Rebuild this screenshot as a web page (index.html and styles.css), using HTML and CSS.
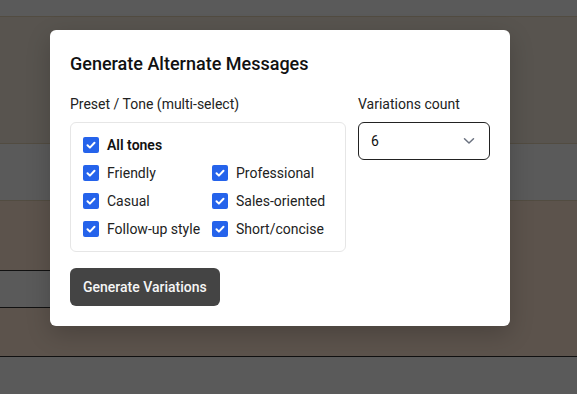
FILE: index.html
```html
<!DOCTYPE html>
<html lang="en">
<head>
<meta charset="utf-8">
<title>Generate Alternate Messages</title>
<link rel="stylesheet" href="styles.css">
</head>
<body>
<div class="page">
  <div class="band band-top"></div>
  <div class="band band-a"></div>
  <div class="band band-b"></div>
  <div class="band band-c">
    <div class="row-field"></div>
  </div>
  <div class="band band-bottom"></div>
</div>

<div class="modal" role="dialog" aria-labelledby="mtitle">
  <h2 class="modal-title" id="mtitle">Generate Alternate Messages</h2>
  <div class="modal-grid">
    <div class="col-tones">
      <div class="field-label">Preset / Tone (multi-select)</div>
      <div class="tone-box">
        <label class="tone tone-all">
          <span class="check"><svg viewBox="0 0 16 16" width="16" height="16"><path d="M4.5 8.3 L6.9 10.6 L11.5 5.8" fill="none" stroke="#fff" stroke-width="2" stroke-linecap="round" stroke-linejoin="round"/></svg></span>
          <span class="tone-text strong">All tones</span>
        </label>
        <div class="tone-grid">
          <label class="tone">
            <span class="check"><svg viewBox="0 0 16 16" width="16" height="16"><path d="M4.5 8.3 L6.9 10.6 L11.5 5.8" fill="none" stroke="#fff" stroke-width="2" stroke-linecap="round" stroke-linejoin="round"/></svg></span>
            <span class="tone-text">Friendly</span>
          </label>
          <label class="tone">
            <span class="check"><svg viewBox="0 0 16 16" width="16" height="16"><path d="M4.5 8.3 L6.9 10.6 L11.5 5.8" fill="none" stroke="#fff" stroke-width="2" stroke-linecap="round" stroke-linejoin="round"/></svg></span>
            <span class="tone-text">Professional</span>
          </label>
          <label class="tone">
            <span class="check"><svg viewBox="0 0 16 16" width="16" height="16"><path d="M4.5 8.3 L6.9 10.6 L11.5 5.8" fill="none" stroke="#fff" stroke-width="2" stroke-linecap="round" stroke-linejoin="round"/></svg></span>
            <span class="tone-text">Casual</span>
          </label>
          <label class="tone">
            <span class="check"><svg viewBox="0 0 16 16" width="16" height="16"><path d="M4.5 8.3 L6.9 10.6 L11.5 5.8" fill="none" stroke="#fff" stroke-width="2" stroke-linecap="round" stroke-linejoin="round"/></svg></span>
            <span class="tone-text">Sales-oriented</span>
          </label>
          <label class="tone">
            <span class="check"><svg viewBox="0 0 16 16" width="16" height="16"><path d="M4.5 8.3 L6.9 10.6 L11.5 5.8" fill="none" stroke="#fff" stroke-width="2" stroke-linecap="round" stroke-linejoin="round"/></svg></span>
            <span class="tone-text">Follow-up style</span>
          </label>
          <label class="tone">
            <span class="check"><svg viewBox="0 0 16 16" width="16" height="16"><path d="M4.5 8.3 L6.9 10.6 L11.5 5.8" fill="none" stroke="#fff" stroke-width="2" stroke-linecap="round" stroke-linejoin="round"/></svg></span>
            <span class="tone-text">Short/concise</span>
          </label>
        </div>
      </div>
    </div>
    <div class="col-count">
      <div class="field-label">Variations count</div>
      <div class="select">
        <span class="select-value">6</span>
        <svg class="chevron" viewBox="0 0 12 8" width="12" height="8"><path d="M1.5 1.8 L6 6 L10.5 1.8" fill="none" stroke="#6b7280" stroke-width="1.5" stroke-linecap="round" stroke-linejoin="round"/></svg>
      </div>
    </div>
  </div>
  <button class="btn-generate" type="button">Generate Variations</button>
</div>
</body>
</html>
```

FILE: styles.css
```css
* { box-sizing: border-box; }

html, body {
  margin: 0;
  padding: 0;
  width: 577px;
  height: 394px;
  overflow: hidden;
  font-family: Roboto, "Liberation Sans", Arial, sans-serif;
}

.page {
  width: 577px;
  height: 394px;
  background: #5a5a5a;
}

.band { width: 100%; }

.band-top {
  height: 16px;
  background: #5a5a5a;
}

.band-a {
  height: 127px;
  background: #58544f;
  border-top: 1px solid #524c41;
}

.band-b {
  height: 57px;
  background: #5a5a5a;
  border-top: 1px solid #524c41;
}

.band-c {
  height: 156px;
  background: #5c534c;
  border-top: 1px solid #524c41;
  padding-top: 69px;
}

.row-field {
  width: 320px;
  height: 38px;
  background: #5a5a5a;
  border-top: 1px solid #111;
  border-bottom: 1px solid #111;
}

.band-bottom {
  height: 38px;
  background: #5a5a5a;
  border-top: 1px solid #111;
}

.modal {
  position: absolute;
  left: 50px;
  top: 30px;
  width: 460px;
  padding: 20px;
  background: #fff;
  border-radius: 6px;
  box-shadow: 0 8px 24px rgba(0, 0, 0, 0.2);
  color: #1f1f1f;
}

.modal-title {
  margin: 0 0 17px;
  font-size: 18px;
  line-height: 27px;
  font-weight: 500;
  color: #111;
}

.modal-grid {
  display: flex;
  gap: 12px;
}

.col-tones { flex: 1; }

.col-count { width: 132px; }

.field-label {
  font-size: 14px;
  line-height: 20px;
  color: #222;
  margin-bottom: 8px;
}

.tone-box {
  border: 1px solid #e6e6e6;
  border-radius: 6px;
  padding: 8px 12px 8px;
}

.tone-grid {
  display: grid;
  grid-template-columns: 129px auto;
}

.tone {
  display: flex;
  align-items: center;
  gap: 8px;
  height: 28px;
  font-size: 14px;
  color: #222;
}

.check {
  width: 16px;
  height: 16px;
  border-radius: 2px;
  background: #2563eb;
  display: flex;
  flex: none;
}

.tone-text.strong {
  font-weight: 600;
  color: #111;
}

.select {
  height: 38px;
  border: 1px solid #222;
  border-radius: 6px;
  display: flex;
  align-items: center;
  justify-content: space-between;
  padding: 0 14px 0 12px;
  font-size: 14px;
  color: #111;
}

.select-value { line-height: 20px; margin-top: -1px; }

.chevron { display: block; }

.btn-generate {
  margin-top: 16px;
  height: 38px;
  padding: 0 13px;
  border: none;
  border-radius: 6px;
  background: #444;
  color: #f5f5f5;
  font-family: Roboto, "Liberation Sans", Arial, sans-serif;
  font-size: 14px;
  font-weight: 500;
}
```
